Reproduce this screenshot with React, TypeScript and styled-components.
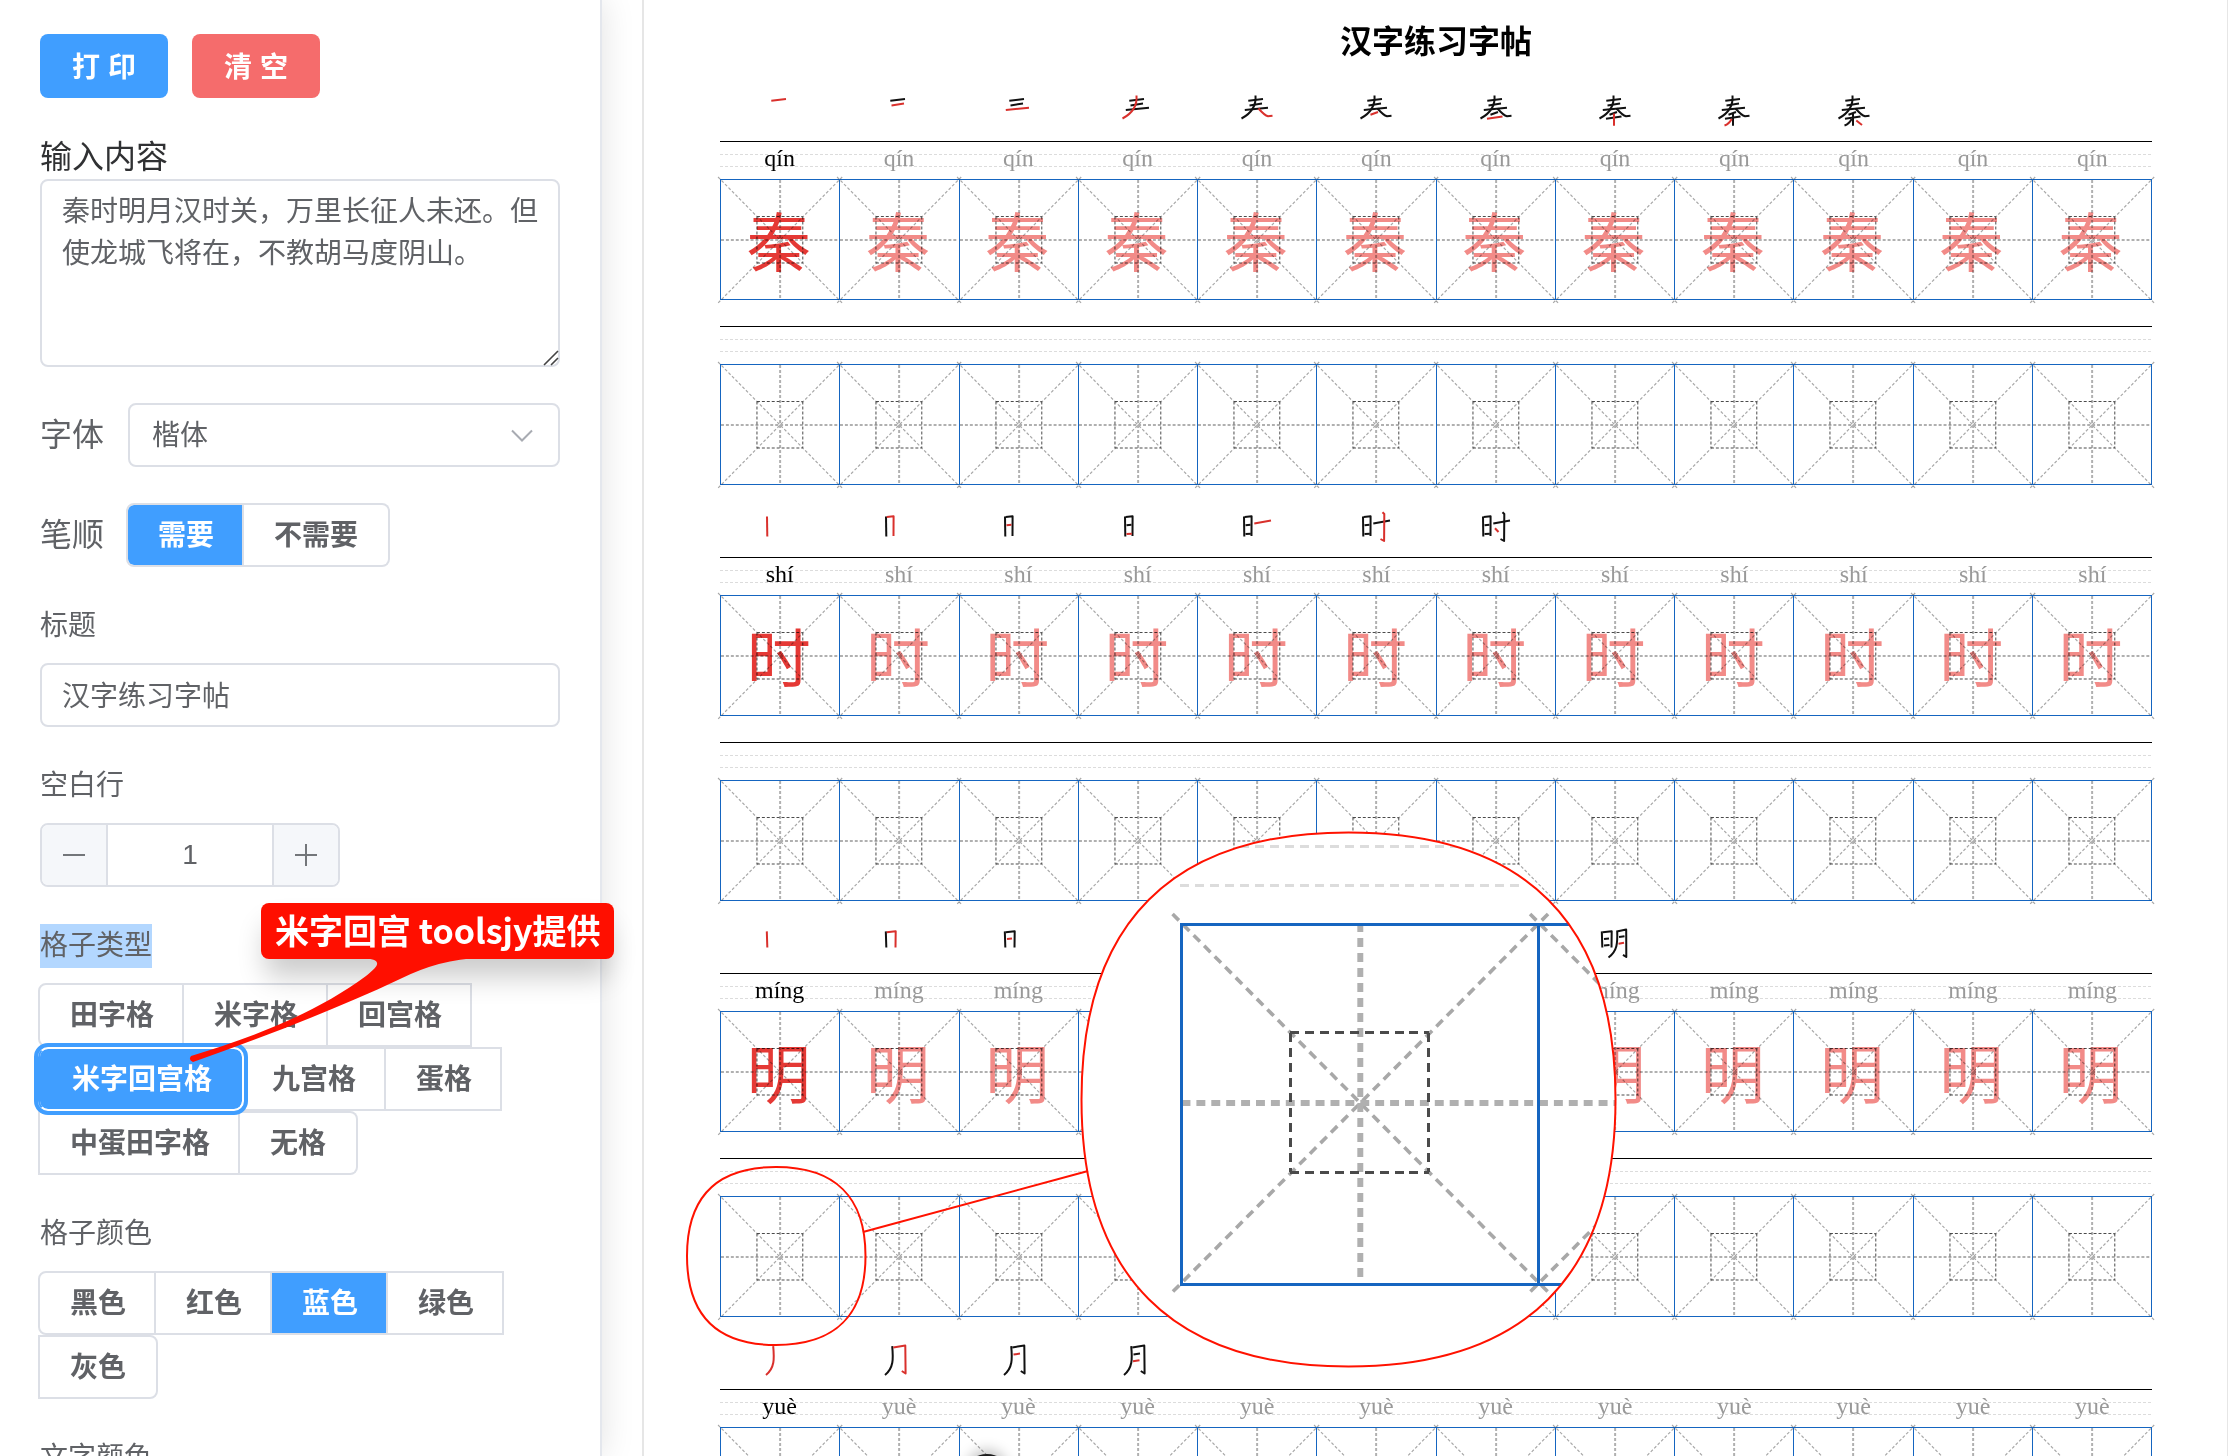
import React, { useState } from "react";
import styled, { createGlobalStyle } from "styled-components";

const sans = '"Liberation Sans", "Noto Sans CJK SC", sans-serif';
const serif = '"Liberation Serif", "Noto Sans CJK SC", serif';
const COLUMNS = 12;

const GlobalStyle = createGlobalStyle`
  * { box-sizing: border-box; }
  body { margin: 0; background: #fff; color: #606266; font-family: ${sans}; }
  button, input, select, textarea { font: inherit; color: inherit; }
`;

/* ---------- page frame ---------- */

const Page = styled.div`
  position: relative;
  display: flex;
  height: 100vh;
  overflow: hidden;
`;

const Sidebar = styled.aside`
  isolation: isolate;
  flex: none;
  width: 602px;
  padding: 34px 40px;
  border-right: 2px solid #e4e7ed;
  box-shadow: 0 0 32px rgba(0, 0, 0, 0.12);
  overflow: hidden;
`;

const Sheet = styled.main`
  flex: 1;
  min-width: 0;
  margin: 0 -1px 0 40px;
  padding: 20px 75px 0 76px;
  border: 2px solid #e6e6e6;
  border-width: 0 2px;
  overflow: hidden;
`;

/* ---------- sidebar controls ---------- */

const Actions = styled.div`
  display: flex;
  gap: 24px;
`;

const ActionButton = styled.button<{ $color: string }>`
  width: 128px;
  height: 64px;
  padding: 0 0 2px;
  border: 0;
  border-radius: 8px;
  background: ${(p) => p.$color};
  color: #fff;
  font-size: 28px;
  font-weight: 600;
`;

const AreaLabel = styled.label`
  display: block;
  margin-top: 38px;
  color: #303133;
  font-size: 32px;
  line-height: 43px;
`;

const AreaWrap = styled.div`
  position: relative;
  display: flex;
`;

const TextArea = styled.textarea`
  width: 100%;
  height: 188px;
  padding: 10px 20px;
  border: 2px solid #dcdfe6;
  border-radius: 8px;
  font-size: 28px;
  line-height: 42px;
  resize: none;
  overflow: hidden;
  outline: none;
`;

const ResizeGrip = styled.svg`
  position: absolute;
  right: 1px;
  bottom: 1px;
`;

const InlineField = styled.div`
  display: flex;
  align-items: center;
  gap: 24px;
  margin-top: 36px;
`;

const InlineLabel = styled.label`
  font-size: 32px;
  line-height: 44px;
`;

const SelectWrap = styled.div`
  position: relative;
  flex: 1;
`;

const Select = styled.select`
  display: block;
  width: 100%;
  height: 64px;
  padding: 0 22px;
  border: 2px solid #dcdfe6;
  border-radius: 8px;
  background: #fff;
  font-size: 28px;
  appearance: none;
`;

const Chevron = styled.svg`
  position: absolute;
  top: 26px;
  right: 26px;
  pointer-events: none;
`;

const FieldLabel = styled.label`
  display: block;
  margin: 36px 0 14px;
  font-size: 28px;
  line-height: 46px;
`;

const Marked = styled.span`
  display: inline-block;
  background: #b3d7ff;
  line-height: 44px;
`;

const TextInput = styled.input`
  display: block;
  width: 100%;
  height: 64px;
  padding: 0 20px 2px;
  border: 2px solid #dcdfe6;
  border-radius: 8px;
  font-size: 28px;
`;

const Stepper = styled.div`
  display: flex;
  width: 300px;
  height: 64px;
  border: 2px solid #dcdfe6;
  border-radius: 8px;
  overflow: hidden;
`;

const StepButton = styled.button`
  display: grid;
  place-items: center;
  flex: none;
  width: 64px;
  padding: 0;
  border: 0;
  background: #f5f7fa;
`;

const StepValue = styled.input`
  flex: 1;
  min-width: 0;
  padding: 0;
  border: 2px solid #dcdfe6;
  border-width: 0 2px;
  font-size: 28px;
  text-align: center;
`;

const Segments = styled.div`
  display: flex;
  flex-wrap: wrap;
  margin: 0 -2px;
`;

const Segment = styled.label<{ $ring?: boolean }>`
  display: block;
  height: 64px;
  padding: 0 28px 0 30px;
  border: 2px solid #dcdfe6;
  border-left-width: 0;
  font-size: 28px;
  font-weight: 600;
  line-height: 62px;
  &:first-child {
    border-left-width: 2px;
    border-radius: 8px 0 0 8px;
  }
  &:last-child {
    padding-right: 30px;
    border-radius: 0 8px 8px 0;
  }
  &:has(input:checked) {
    background: #409eff;
    background-clip: padding-box;
    color: #fff;
  }
  ${(p) =>
    p.$ring &&
    `
    &:has(input:checked) {
      position: relative;
      z-index: 1;
      margin-right: -2px;
      padding: 0 30px 0 32px;
      border-left-width: 2px;
      border-color: #fff #fff #fff #409eff;
      border-radius: 10px;
      outline: 4px solid #409eff;
    }
  `}
`;

const RowStart = styled(Segment)`
  border-left-width: 2px;
`;

const HiddenRadio = styled.input`
  position: absolute;
  opacity: 0;
  pointer-events: none;
`;

/* ---------- practice sheet ---------- */

const Title = styled.h1`
  margin: 0 0 5px;
  color: #000;
  font-family: ${serif};
  font-size: 32px;
  line-height: 44px;
  text-align: center;
`;

const Columns = styled.div`
  display: grid;
  grid-template-columns: repeat(${COLUMNS}, 1fr);
`;

const StrokeRow = styled(Columns)`
  height: 72px;
  padding-top: 22px;
  justify-items: center;
`;

const PinyinRow = styled(Columns)`
  height: 38px;
  border-top: 1px solid #000;
`;

const Pinyin = styled.div<{ $model: boolean }>`
  color: ${(p) => (p.$model ? "#000" : "#999")};
  font-family: ${serif};
  font-size: 24px;
  line-height: 32px;
  text-align: center;
  background-image: linear-gradient(90deg, #dcdcdc 60%, transparent 60%),
    linear-gradient(90deg, #dcdcdc 60%, transparent 60%);
  background-size: 5px 1px;
  background-position: 0 12px, 0 24px;
  background-repeat: repeat-x;
`;

const GridRow = styled(Columns)`
  height: 121px;
  margin-bottom: 26px;
  border: 1px solid #1565c0;
  border-left-width: 0;
`;

const LastGridRow = styled(GridRow)`
  margin-bottom: 0;
`;

const Cell = styled.div<{ $model?: boolean }>`
  position: relative;
  height: 119px;
  padding-right: 3px;
  border-left: 1px solid #1565c0;
  color: ${(p) => (p.$model ? "#e53935" : "#f28b88")};
  font-size: 64px;
  line-height: 128px;
  text-align: center;
`;

const CellLines = styled.svg`
  position: absolute;
  inset: 0;
  width: 100%;
  height: 100%;
  overflow: visible;
  mix-blend-mode: multiply;
`;

/* ---------- callouts laid over the page ---------- */

const Callouts = styled.svg`
  position: absolute;
  top: 0;
  left: 0;
  width: 100%;
  height: 100%;
  pointer-events: none;
`;

const Tag = styled.div`
  position: absolute;
  top: 903px;
  left: 261px;
  height: 56px;
  padding: 0 14px;
  border-radius: 8px;
  background: #ff0f00;
  color: #fff;
  font-family: "Noto Sans CJK SC", sans-serif;
  font-size: 34px;
  font-weight: 600;
  line-height: 54px;
  white-space: nowrap;
`;

/* ---------- data ---------- */

const HAN_SUN = ["M7 9.5L7.3 29.5", "M7.7 10L14.6 9.3L14.5 29", "M8.5 18.3L13.5 17.8", "M8.5 27L13.8 26.7"];
const MOON_SUN = ["M6.8 8.4L7.3 24.5", "M7.8 9.2L16.7 8.2L16.5 24.5", "M9 16L14 15.4", "M9 22.4L14.5 22"];

const ENTRIES = [
  {
    char: "秦",
    pinyin: "qín",
    strokes: [
      "M11.3 9.7L26 8",
      "M12.5 14.4L25 12.6",
      "M7.8 19L31 16.7",
      "M18.5 4.5C19.5 16 13 23 4.5 27.5",
      "M21.5 17.5C25 21.5 28 24.5 31 25.3L35.5 24.8",
      "M14.5 23.8L22 21",
      "M11 27.8L26.5 25.6",
      "M19 22.5L19 34.7",
      "M17.7 28Q15 33 10.5 34.5",
      "M22.3 29.5L28 34",
    ],
  },
  {
    char: "时",
    pinyin: "shí",
    strokes: [
      ...HAN_SUN,
      "M17.3 16.5L34 13.5",
      "M26.5 5.2L28.3 7L28.1 34L24.5 32",
      "M19 21.3L22.5 25",
    ],
  },
  {
    char: "明",
    pinyin: "míng",
    strokes: [
      ...MOON_SUN,
      "M22.2 7.4C22.6 20 22.4 28 13.5 34.5",
      "M23 8.2L31.2 6.6L31.3 34L28 31.8",
      "M24 14L29.5 13.2",
      "M23.5 20.8L29 19.8",
    ],
  },
  {
    char: "月",
    pinyin: "yuè",
    strokes: [
      "M13.2 7.2C14.4 20 14.6 29 6 36",
      "M14.3 8.4L26.3 6.6L26.6 34.5L22.8 32",
      "M15.5 15.6L22 14.6",
      "M15 22.3L21.5 21.3",
    ],
  },
];

const cells = Array.from({ length: COLUMNS }, (_, i) => i);

/* ---------- pieces ---------- */

/* The guide lines of one 120-unit square: cross, diagonals and inner box. */
function Guides() {
  return (
    <g fill="none" strokeDasharray="3 2">
      <path d="M-3 -3L123 123M123 -3L-3 123" stroke="#a8a8a8" strokeWidth="1.2" />
      <path d="M60 0V120M0 60H120" stroke="#b0b0b0" strokeWidth="2" />
      <path d="M36.5 36.5H83M36.5 83H83M36.5 36.5V83M83 36.5V83" stroke="#4a4a4a" strokeWidth="1" shapeRendering="crispEdges" />
    </g>
  );
}

function GridCell({ text, model }: { text?: string; model?: boolean }) {
  return (
    <Cell $model={model}>
      {text}
      <CellLines viewBox="0 0 120 119" preserveAspectRatio="none" aria-hidden="true">
        <Guides />
      </CellLines>
    </Cell>
  );
}

function StrokeStep({ strokes, step }: { strokes: string[]; step: number }) {
  return (
    <svg width="40" height="40" viewBox="0 0 40 40" fill="none" strokeWidth="2" strokeLinejoin="round" aria-hidden="true">
      {strokes.slice(0, step + 1).map((d, i) => (
        <path key={i} d={d} stroke={i === step ? "#d9302c" : "#111"} />
      ))}
    </svg>
  );
}

function PracticeBlock({ char, pinyin, strokes }: (typeof ENTRIES)[number]) {
  return (
    <section>
      <StrokeRow>
        {strokes.map((_, i) => (
          <StrokeStep key={i} strokes={strokes} step={i} />
        ))}
      </StrokeRow>
      <PinyinRow>
        {cells.map((i) => (
          <Pinyin key={i} $model={i === 0}>{pinyin}</Pinyin>
        ))}
      </PinyinRow>
      <GridRow>
        {cells.map((i) => (
          <GridCell key={i} text={char} model={i === 0} />
        ))}
      </GridRow>
      <PinyinRow>
        {cells.map((i) => (
          <Pinyin key={i} $model={false} />
        ))}
      </PinyinRow>
      <LastGridRow>
        {cells.map((i) => (
          <GridCell key={i} />
        ))}
      </LastGridRow>
    </section>
  );
}

function SegmentGroup(props: {
  name: string;
  options: string[];
  initial: string;
  ring?: boolean;
  rowStarts?: string[];
}) {
  const [value, setValue] = useState(props.initial);
  return (
    <Segments role="radiogroup" aria-label={props.name}>
      {props.options.map((option) => {
        const Part = props.rowStarts?.includes(option) ? RowStart : Segment;
        return (
          <Part key={option} $ring={props.ring}>
            <HiddenRadio
              type="radio"
              name={props.name}
              checked={value === option}
              onChange={() => setValue(option)}
            />
            {option}
          </Part>
        );
      })}
    </Segments>
  );
}

function CalloutLayer() {
  const lens =
    "M1348.5 832.5C1525 832.5 1615.5 923 1615.5 1099.5S1525 1366.5 1348.5 1366.5S1081.5 1276 1081.5 1099.5S1172 832.5 1348.5 832.5Z";
  return (
    <>
      <Callouts aria-hidden="true">
        <defs>
          <clipPath id="lens">
            <path d={lens} />
          </clipPath>
          <filter id="soft" x="-50%" y="-100%" width="200%" height="400%">
            <feGaussianBlur stdDeviation="14" />
          </filter>
          <filter id="knobShadow" x="-100%" y="-100%" width="300%" height="300%">
            <feGaussianBlur stdDeviation="7" />
          </filter>
        </defs>
        <circle cx="987" cy="1470" r="20" fill="#000" opacity="0.25" filter="url(#knobShadow)" />
        <ellipse cx="987" cy="1469" rx="20" ry="15" fill="#1c1c1c" />

        <path d={lens} fill="#fff" />
        <g clipPath="url(#lens)">
          <path d="M1180 846.5H1540M1180 885.5H1525" stroke="#dcdcdc" strokeWidth="3" strokeDasharray="9 6" />
          <g transform="translate(1181.5 923) scale(2.98 3)">
            <Guides />
          </g>
          <g transform="translate(1539 923) scale(2.98 3)">
            <Guides />
          </g>
          <path d="M1181.5 924.5H1640M1181.5 1284.5H1640M1181.5 923V1286M1538.5 923V1286" stroke="#1565c0" strokeWidth="3" fill="none" />
        </g>
        <g fill="none" stroke="#ff1200" strokeWidth="2">
          <path d={lens} />
          <path d="M776 1167C835 1167 865.5 1197 865.5 1256S835 1345 776 1345S687 1315 687 1256S717 1167 776 1167Z" />
          <path d="M863 1232L1088 1171" />
        </g>
        <rect x="265" y="925" width="344" height="52" rx="8" fill="#000" opacity="0.2" filter="url(#soft)" />
        <path
          d="M365 958C382 960 380 965 366 976C315 1014 250 1038 191 1056Q188 1060 193 1062C260 1038 330 1012 400 979Q440 959 480 958Z"
          fill="#ff0f00"
        />
      </Callouts>
      <Tag>米字回宫 toolsjy提供</Tag>
    </>
  );
}

export default function App() {
  const [text, setText] = useState("秦时明月汉时关，万里长征人未还。但使龙城飞将在，不教胡马度阴山。");
  const [title, setTitle] = useState("汉字练习字帖");
  const [blankRows, setBlankRows] = useState(1);

  return (
    <Page>
      <GlobalStyle />
      <Sidebar>
        <Actions>
          <ActionButton type="button" $color="#409eff">打 印</ActionButton>
          <ActionButton type="button" $color="#f56c6c">清 空</ActionButton>
        </Actions>

        <AreaLabel htmlFor="content">输入内容</AreaLabel>
        <AreaWrap>
          <TextArea id="content" value={text} onChange={(e) => setText(e.target.value)} spellCheck={false} />
          <ResizeGrip width="16" height="16" viewBox="0 0 16 16" stroke="#444" strokeWidth="1.6" aria-hidden="true">
            <path d="M1 15L15 1M8 15L15 8" />
          </ResizeGrip>
        </AreaWrap>

        <InlineField>
          <InlineLabel htmlFor="font">字体</InlineLabel>
          <SelectWrap>
            <Select id="font" defaultValue="楷体">
              <option>楷体</option>
            </Select>
            <Chevron width="24" height="14" viewBox="0 0 24 14" fill="none" stroke="#a8abb2" strokeWidth="2" aria-hidden="true">
              <path d="M2 1.5L12 11.5L22 1.5" />
            </Chevron>
          </SelectWrap>
        </InlineField>

        <InlineField>
          <InlineLabel as="span">笔顺</InlineLabel>
          <SegmentGroup name="笔顺" options={["需要", "不需要"]} initial="需要" />
        </InlineField>

        <FieldLabel htmlFor="title">标题</FieldLabel>
        <TextInput id="title" value={title} onChange={(e) => setTitle(e.target.value)} />

        <FieldLabel htmlFor="blank">空白行</FieldLabel>
        <Stepper>
          <StepButton type="button" aria-label="减少" onClick={() => setBlankRows((n) => Math.max(0, n - 1))}>
            <svg width="24" height="24" stroke="#73767a" strokeWidth="2">
              <path d="M1 12H23" />
            </svg>
          </StepButton>
          <StepValue id="blank" value={blankRows} readOnly />
          <StepButton type="button" aria-label="增加" onClick={() => setBlankRows((n) => n + 1)}>
            <svg width="24" height="24" stroke="#73767a" strokeWidth="2">
              <path d="M1 12H23M12 1V23" />
            </svg>
          </StepButton>
        </Stepper>

        <FieldLabel as="div">
          <Marked>格子类型</Marked>
        </FieldLabel>
        <SegmentGroup
          name="格子类型"
          options={["田字格", "米字格", "回宫格", "米字回宫格", "九宫格", "蛋格", "中蛋田字格", "无格"]}
          initial="米字回宫格"
          rowStarts={["中蛋田字格"]}
          ring
        />

        <FieldLabel as="div">格子颜色</FieldLabel>
        <SegmentGroup
          name="格子颜色"
          options={["黑色", "红色", "蓝色", "绿色", "灰色"]}
          initial="蓝色"
          rowStarts={["灰色"]}
        />

        <FieldLabel as="div">文字颜色</FieldLabel>
      </Sidebar>

      <Sheet>
        <Title>{title}</Title>
        {ENTRIES.map((entry) => (
          <PracticeBlock key={entry.char} {...entry} />
        ))}
      </Sheet>

      <CalloutLayer />
    </Page>
  );
}
